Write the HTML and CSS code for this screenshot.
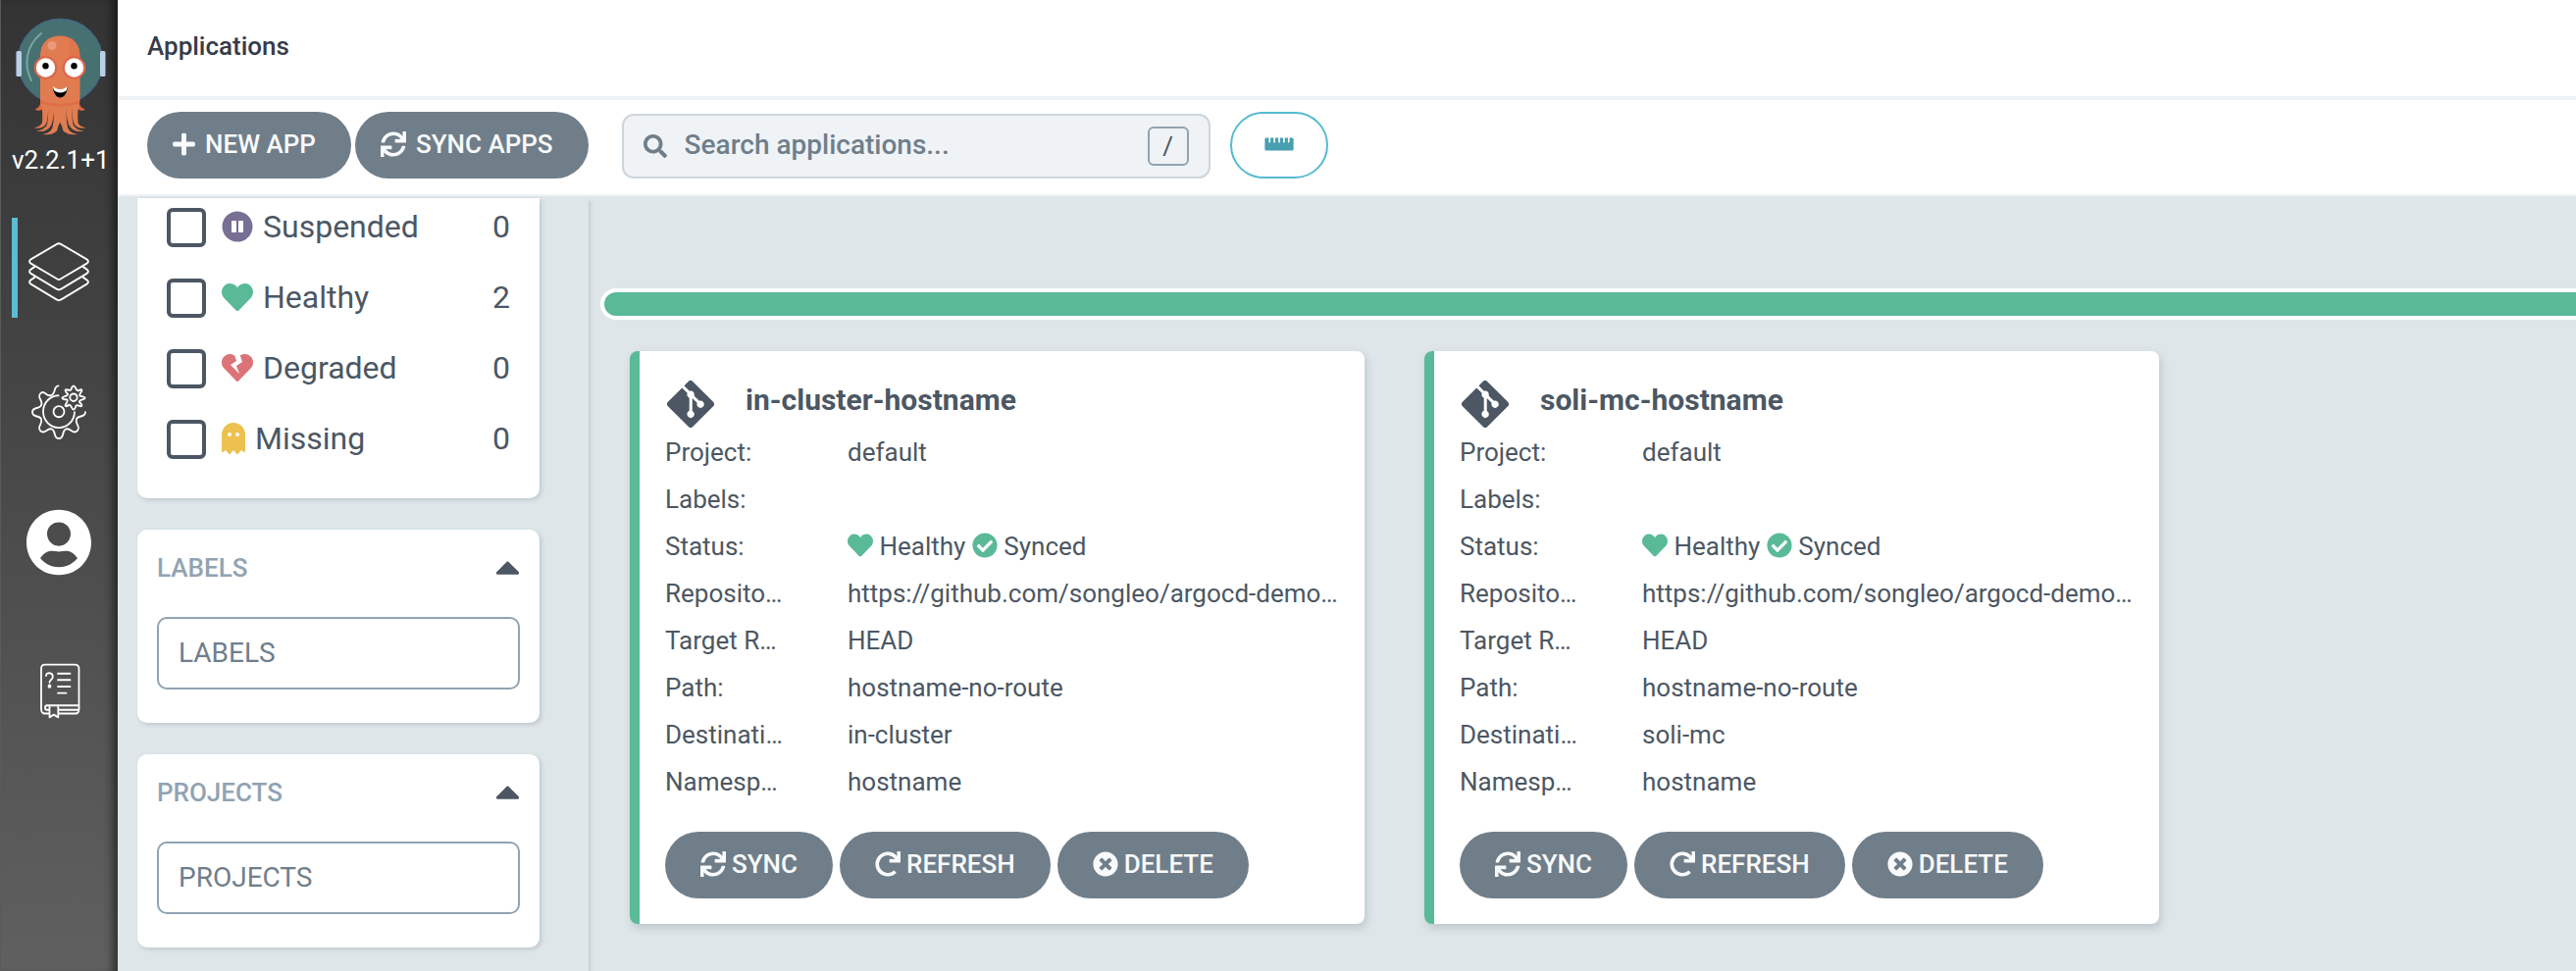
FILE: index.html
```html
<!DOCTYPE html>
<html lang="en">
<head>
<meta charset="utf-8">
<title>Applications - Argo CD</title>
<link rel="stylesheet" href="styles.css">
</head>
<body>
<svg class="sprite" aria-hidden="true">
  <symbol id="i-plus" viewBox="0 0 448 512"><path d="M416 208H272V64c0-17.670-14.330-32-32-32h-32c-17.670 0-32 14.330-32 32v144H32c-17.670 0-32 14.330-32 32v32c0 17.670 14.330 32 32 32h144v144c0 17.670 14.330 32 32 32h32c17.670 0 32-14.330 32-32V304h144c17.670 0 32-14.330 32-32v-32c0-17.670-14.330-32-32-32z"/></symbol>
  <symbol id="i-sync" viewBox="0 0 512 512"><path d="M440.650 12.570l4 82.770A247.160 247.160 0 0 0 255.830 8C134.730 8 33.910 94.920 12.290 209.820A12 12 0 0 0 24.090 224h49.050a12 12 0 0 0 11.670-9.260 175.910 175.910 0 0 1 317-56.940l-101.460-4.860a12 12 0 0 0-12.570 12v47.410a12 12 0 0 0 12 12H500a12 12 0 0 0 12-12V12a12 12 0 0 0-12-12h-47.370a12 12 0 0 0-11.980 12.570zM255.830 432a175.610 175.610 0 0 1-146-77.800l101.800 4.870a12 12 0 0 0 12.570-12v-47.400a12 12 0 0 0-12-12H12a12 12 0 0 0-12 12V500a12 12 0 0 0 12 12h47.350a12 12 0 0 0 12-12.600l-4.150-82.570A247.170 247.170 0 0 0 255.830 504c121.110 0 221.930-86.920 243.550-201.820a12 12 0 0 0-11.800-14.180h-49.050a12 12 0 0 0-11.670 9.260A175.860 175.860 0 0 1 255.830 432z"/></symbol>
  <symbol id="i-redo" viewBox="0 0 512 512"><path d="M500.330 0h-47.410a12 12 0 0 0-12 12.570l4 82.760A247.420 247.420 0 0 0 256 8C119.340 8 7.900 119.530 8 256.190 8.100 393.070 119.100 504 256 504a247.100 247.100 0 0 0 166.180-63.910 12 12 0 0 0 .480-17.430l-34-34a12 12 0 0 0-16.380-.550A176 176 0 1 1 402.100 157.800l-101.530-4.870a12 12 0 0 0-12.570 12v47.410a12 12 0 0 0 12 12h200.330a12 12 0 0 0 12-12V12a12 12 0 0 0-12-12z"/></symbol>
  <symbol id="i-times" viewBox="0 0 512 512"><path d="M256 8C119 8 8 119 8 256s111 248 248 248 248-111 248-248S393 8 256 8zm121.600 313.100c4.700 4.700 4.700 12.300 0 17L338 377.600c-4.700 4.700-12.300 4.700-17 0L256 312l-65.100 65.600c-4.700 4.700-12.300 4.700-17 0L134.400 338c-4.700-4.700-4.700-12.300 0-17l65.600-65-65.600-65.100c-4.700-4.700-4.700-12.300 0-17l39.600-39.600c4.700-4.700 12.300-4.700 17 0l65 65.700 65.100-65.600c4.700-4.700 12.300-4.700 17 0l39.600 39.600c4.700 4.700 4.700 12.300 0 17L312 256l65.600 65.100z"/></symbol>
  <symbol id="i-search" viewBox="0 0 512 512"><path d="M505 442.700L405.300 343c-4.500-4.500-10.600-7-17-7H372c27.600-35.300 44-79.700 44-128C416 93.100 322.900 0 208 0S0 93.100 0 208s93.100 208 208 208c48.300 0 92.700-16.400 128-44v16.300c0 6.400 2.500 12.500 7 17l99.700 99.700c9.400 9.400 24.600 9.400 33.900 0l28.300-28.300c9.400-9.400 9.400-24.600.1-34zM208 336c-70.700 0-128-57.200-128-128 0-70.700 57.200-128 128-128 70.700 0 128 57.200 128 128 0 70.700-57.200 128-128 128z"/></symbol>
  <symbol id="i-ruler" viewBox="0 0 576 512"><path d="M544 128h-48v88c0 4.400-3.600 8-8 8h-16c-4.400 0-8-3.600-8-8v-88h-64v88c0 4.400-3.600 8-8 8h-16c-4.400 0-8-3.600-8-8v-88h-64v88c0 4.400-3.600 8-8 8h-16c-4.400 0-8-3.600-8-8v-88h-64v88c0 4.400-3.600 8-8 8h-16c-4.400 0-8-3.600-8-8v-88h-64v88c0 4.400-3.600 8-8 8H88c-4.400 0-8-3.600-8-8v-88H32c-17.700 0-32 14.300-32 32v192c0 17.700 14.300 32 32 32h512c17.700 0 32-14.300 32-32V160c0-17.700-14.300-32-32-32z"/></symbol>
  <symbol id="i-heart" viewBox="0 0 512 512"><path d="M462.300 62.600C407.500 15.900 326 24.300 275.700 76.200L256 96.500l-19.700-20.300C186.100 24.300 104.500 15.900 49.700 62.600c-62.800 53.600-66.100 149.800-9.900 207.900l193.500 199.800c12.500 12.900 32.800 12.900 45.300 0l193.500-199.800c56.300-58.100 53-154.300-9.800-207.900z"/></symbol>
  <symbol id="i-broken" viewBox="0 0 512 512"><path d="M473.700 73.800l-2.400-2.500c-46-47-118-51.700-169.600-14.800L336 159.900l-96 64 48 128-144-144 96-64-28.600-86.500C159.700 19.600 87 24 40.700 71.400l-2.400 2.400C-10.400 123.600-12.500 202.900 31 256l212.100 218.600c7.100 7.300 18.600 7.300 25.700 0L481 255.900c43.500-53 41.400-132.300-7.300-182.100z"/></symbol>
  <symbol id="i-pause" viewBox="0 0 512 512"><path d="M256 8C119 8 8 119 8 256s111 248 248 248 248-111 248-248S393 8 256 8zm-16 328c0 8.800-7.200 16-16 16h-48c-8.800 0-16-7.200-16-16V176c0-8.800 7.200-16 16-16h48c8.800 0 16 7.200 16 16v160zm112 0c0 8.800-7.200 16-16 16h-48c-8.800 0-16-7.200-16-16V176c0-8.800 7.200-16 16-16h48c8.800 0 16 7.200 16 16v160z"/></symbol>
  <symbol id="i-ghost" viewBox="0 0 384 512"><path d="M186.100.090C81.010 3.240 0 94.920 0 200.050v263.920c0 14.260 17.230 21.390 27.310 11.310l24.920-18.530c6.660-4.950 16-3.990 21.510 2.210l42.950 48.350c6.250 6.250 16.380 6.250 22.630 0l40.720-45.850c6.370-7.170 17.560-7.170 23.920 0l40.720 45.850c6.250 6.250 16.380 6.250 22.630 0l42.950-48.350c5.510-6.200 14.850-7.170 21.510-2.210l24.920 18.530c10.080 10.080 27.310 2.940 27.310-11.310V192C384 84 294.830-3.170 186.100.090zM128 224c-17.670 0-32-14.330-32-32s14.330-32 32-32 32 14.330 32 32-14.330 32-32 32zm128 0c-17.670 0-32-14.330-32-32s14.330-32 32-32 32 14.330 32 32-14.330 32-32 32z"/></symbol>
  <symbol id="i-check" viewBox="0 0 512 512"><path d="M504 256c0 136.967-111.033 248-248 248S8 392.967 8 256 119.033 8 256 8s248 111.033 248 248zM227.314 387.314l184-184c6.248-6.248 6.248-16.379 0-22.627l-22.627-22.627c-6.248-6.249-16.379-6.249-22.628 0L216 308.118l-70.059-70.059c-6.248-6.248-16.379-6.248-22.628 0l-22.627 22.627c-6.248 6.248-6.248 16.379 0 22.627l104 104c6.249 6.249 16.379 6.249 22.628.001z"/></symbol>
  <symbol id="i-git" viewBox="0 32 448 448"><path d="M439.550 236.050L244 40.450a28.870 28.870 0 0 0-40.810 0l-40.660 40.630 51.520 51.520c27.060-9.140 52.680 16.770 43.390 43.680l49.660 49.660c34.230-11.800 61.180 31 35.470 56.690-26.490 26.490-70.210-2.870-56-37.340L240.220 199v121.850c25.300 12.540 22.260 41.850 9.080 55a34.340 34.340 0 0 1-48.550 0c-17.570-17.600-11.070-46.910 11.250-56v-123c-20.800-8.510-24.600-30.740-18.640-45L142.570 101 8.450 235.140a28.860 28.860 0 0 0 0 40.810l195.610 195.600a28.860 28.860 0 0 0 40.800 0l194.690-194.690a28.860 28.860 0 0 0 0-40.810z"/></symbol>
  <symbol id="i-caret" viewBox="0 176 320 192"><path d="M288.662 352H31.338c-17.818 0-26.741-21.543-14.142-34.142l128.662-128.662c7.810-7.810 20.474-7.810 28.284 0l128.662 128.662c12.600 12.599 3.676 34.142-14.142 34.142z"/></symbol>
  <symbol id="argo-arms" viewBox="0 0 120 142">
    <path d="M41.500 100H49.500Q49.500 118 47.500 125Q45 132 34.500 130.300Q42 129 43 125Q44 117 41.500 100Z"/>
    <path d="M48.500 100H55.500Q55.500 119 52.500 127Q48.500 135.500 37 133.800Q46 132 48 127Q50 118 48.500 100Z"/>
    <path d="M54 100H62V123.500Q59 128 58 133.500Q52 138.500 43.500 137Q51.500 135.500 53.500 130Q56 120 54 100Z"/>
  </symbol>
</svg>

<div class="app">
  <aside class="sidebar">
    <svg class="logo" viewBox="0 0 120 142" aria-label="Argo">
      <circle cx="61.500" cy="62.500" r="43" fill="#477070" stroke="#456a88" stroke-width="1.500"/>
      <path d="M42 34C26 47 24 67 32 82" fill="none" stroke="#7aa7a3" stroke-width="2" stroke-linecap="round"/>
      <rect x="16.500" y="52" width="5.500" height="26" rx="1.500" fill="#b9cfe9"/>
      <rect x="102" y="52" width="5.500" height="26" rx="1.500" fill="#b9cfe9"/>
      <path d="M41.500 102C41.500 108 39 110 35.500 111.500C38 113.500 41 113 43 111.500L80 111.500C82 113 84.500 113.500 87 111.500C83 110 80.500 108 80.500 102Z" fill="#dd6848"/>
      <path d="M41 102V57C41 44 49 36.500 61 36.500S81.500 44 81.500 57V102L80 111H42.500Z" fill="#e17c50"/>
      <g fill="#e17c50">
        <use href="#argo-arms" width="120" height="142"/>
        <use href="#argo-arms" width="120" height="142" transform="matrix(-1 0 0 1 122.500 0)"/>
      </g>
      <path d="M64 37C76 45 69 56 69 72H81.500V57C81.500 44 74 37 64 37Z" fill="#df7049" opacity=".55"/>
      <path d="M42 104Q61.500 111 80.500 104" fill="none" stroke="#df6d4a" stroke-width="2.500"/>
      <circle cx="53" cy="46.500" r="4.500" fill="#e99a7c"/>
      <circle cx="46.500" cy="69" r="11.800" fill="#dd6548"/><circle cx="75.500" cy="69" r="11.800" fill="#dd6548"/>
      <circle cx="46.500" cy="69" r="9.700" fill="#fff"/><circle cx="75.500" cy="69" r="9.700" fill="#fff"/>
      <circle cx="46.500" cy="67.300" r="3.200" fill="#000"/><circle cx="75.500" cy="67.300" r="3.200" fill="#000"/>
      <path d="M54 87.500C57 92.500 66 92.500 68.700 87.500C69 95 65 99.500 61.300 99.500S54 95 54 87.500Z" fill="#000"/>
      <path d="M54 87.500C57 92 66 92 68.700 87.500C68.500 90 68 91.500 67.500 92.500C64 95 59 95 55.500 92.500C54.500 91 54 89.500 54 87.500Z" fill="#fff"/>
    </svg>
    <div class="version">v2.2.1+1</div>
    <nav class="nav">
      <a class="nav-link nav-link-active" href="#" aria-label="Applications">
        <svg viewBox="0 221 120 95" preserveAspectRatio="none"><g class="line">
          <path d="M58 246Q60 245 62 246L88.500 260.500Q91.500 262.500 88.500 264.500L62 279Q60 280.500 58 279L31.500 264.500Q28.500 262.500 31.500 260.500Z"/>
          <path d="M35.500 267.500L31.500 270Q28.500 272 31.500 274L58 288.800Q60 290 62 288.800L88.500 274Q91.500 272 88.500 270L84.500 267.500"/>
          <path d="M35.500 277.500L31.500 280Q28.500 282 31.500 284L58 298.800Q60 300 62 298.800L88.500 284Q91.500 282 88.500 280L84.500 277.500"/>
        </g></svg>
      </a>
      <a class="nav-link" href="#" aria-label="Settings">
        <svg viewBox="0 355 120 95" preserveAspectRatio="none"><g class="line">
          <path d="M59.500 380.500C54 381 57.500 388 52 389.500C47 391.500 46 384 41.500 387.500C37 392 44.500 394 42 399C40.500 403 33 400 33 405.500S40.500 408 42 412C44 417 37 419 41.500 423.500C46 427 48 420 52.500 421.500C57.500 423 54 430.500 60 430.500S62.500 423 67.500 421.500C72 420 74 427 78.500 423.500C83 419 76 417 78 412C79.500 408 87 411 87 405.500"/>
          <path d="M59.500 389.700A16 15.300 0 1 0 76 405.500"/>
          <ellipse cx="60" cy="405" rx="5.500" ry="5.200"/><ellipse cx="75" cy="391.500" rx="3.700" ry="3.500"/>
          <path d="M73 382.500Q75 378.500 77 382.500T81.300 384.300Q85.200 383.300 82.300 387T84 390.500Q89.500 392 84 393.500T82.300 397Q85.200 401 81 399.500T77 401Q75 405 73 401T69 399.500Q64.800 401 67.700 397T66 393.500Q60.500 392 66 390.500T67.700 387Q64.800 383.300 69 384.300T73 382.500Z"/>
        </g></svg>
      </a>
      <a class="nav-link" href="#" aria-label="User Info">
        <svg viewBox="0 489 120 95" preserveAspectRatio="none"><path fill="#fff" fill-rule="evenodd" d="M27 529C27 512 41 498 60 498S93 512 93 529S79 560 60 560S27 546 27 529ZM48 521C48 527.500 53.500 532.500 60 532.500S72 527.500 72 521S66.500 510 60 510S48 514.500 48 521ZM41 544C51 555.500 69 555.500 79 544C73 536 67 536.500 60 538C53 536.500 47 536 41 544Z"/></svg>
      </a>
      <a class="nav-link" href="#" aria-label="Documentation">
        <svg viewBox="0 623 120 95" preserveAspectRatio="none"><g class="line">
          <path d="M49.500 691.500H46Q42 691.500 42 687V649Q42 645 46 645H76Q80.500 645 80.500 649V687Q80.500 691.500 77 691.500H60"/>
          <path d="M80 683.800H48Q46 683.800 46 686T48 688H50M80 688H60"/>
          <path d="M50.500 684V695L54.800 692.500L59.300 695V684"/>
          <path d="M59 653.500H71.500M59 659.500H71.500M59 665.800H71.500M59 672H67.500"/>
          <path d="M47 655.500C47 652 53.800 652 53.800 656.500C53.800 659.500 50.500 659 50.500 662"/>
          <circle cx="50.500" cy="665.500" r="1"/>
        </g></svg>
      </a>
    </nav>
  </aside>

  <div class="main">
    <header class="header"><h1 class="header-title">Applications</h1></header>
    <div class="toolbar">
      <div class="toolbar-actions">
        <button class="btn btn-wide" type="button"><svg class="icon icon-narrow"><use href="#i-plus"/></svg>NEW APP</button>
        <button class="btn btn-wide" type="button"><svg class="icon"><use href="#i-sync"/></svg>SYNC APPS</button>
      </div>
      <div class="search">
        <svg class="icon search-icon"><use href="#i-search"/></svg>
        <input class="search-input" type="text" placeholder="Search applications..." aria-label="Search applications">
        <kbd class="search-key">/</kbd>
      </div>
      <button class="btn-outline" type="button" aria-label="Toggle compact view"><svg class="icon-ruler"><use href="#i-ruler"/></svg></button>
    </div>

    <div class="content">
      <section class="filters">
        <div class="panel panel-health">
          <label class="check-row"><input class="check" type="checkbox"><span class="check-label"><svg class="icon-lg purple"><use href="#i-pause"/></svg>Suspended</span><span class="count">0</span></label>
          <label class="check-row"><input class="check" type="checkbox"><span class="check-label"><svg class="icon-lg green"><use href="#i-heart"/></svg>Healthy</span><span class="count">2</span></label>
          <label class="check-row"><input class="check" type="checkbox"><span class="check-label"><svg class="icon-lg red"><use href="#i-broken"/></svg>Degraded</span><span class="count">0</span></label>
          <label class="check-row"><input class="check" type="checkbox"><span class="check-label"><svg class="icon-lg icon-ghost yellow"><use href="#i-ghost"/></svg>Missing</span><span class="count">0</span></label>
        </div>
        <div class="panel">
          <div class="panel-head"><label for="f-labels">LABELS</label><svg class="caret"><use href="#i-caret"/></svg></div>
          <input class="panel-input" id="f-labels" type="text" placeholder="LABELS">
        </div>
        <div class="panel">
          <div class="panel-head"><label for="f-projects">PROJECTS</label><svg class="caret"><use href="#i-caret"/></svg></div>
          <input class="panel-input" id="f-projects" type="text" placeholder="PROJECTS">
        </div>
      </section>

      <section class="apps">
        <div class="status-bar"><div class="status-fill"></div></div>
        <div class="tiles">
          <article class="tile">
            <div class="tile-head"><svg class="git"><use href="#i-git"/></svg><h2 class="tile-title">in-cluster-hostname</h2></div>
            <dl class="facts">
              <dt>Project:</dt><dd>default</dd>
              <dt>Labels:</dt><dd></dd>
              <dt>Status:</dt><dd><svg class="icon green"><use href="#i-heart"/></svg> Healthy <svg class="icon green"><use href="#i-check"/></svg> Synced</dd>
              <dt>Repository:</dt><dd>https://github.com/songleo/argocd-demo.git</dd>
              <dt>Target Revision:</dt><dd>HEAD</dd>
              <dt>Path:</dt><dd>hostname-no-route</dd>
              <dt>Destination:</dt><dd>in-cluster</dd>
              <dt>Namespace:</dt><dd>hostname</dd>
            </dl>
            <div class="tile-actions">
              <button class="btn" type="button"><svg class="icon"><use href="#i-sync"/></svg>SYNC</button>
              <button class="btn" type="button"><svg class="icon"><use href="#i-redo"/></svg>REFRESH</button>
              <button class="btn" type="button"><svg class="icon"><use href="#i-times"/></svg>DELETE</button>
            </div>
          </article>
          <article class="tile">
            <div class="tile-head"><svg class="git"><use href="#i-git"/></svg><h2 class="tile-title">soli-mc-hostname</h2></div>
            <dl class="facts">
              <dt>Project:</dt><dd>default</dd>
              <dt>Labels:</dt><dd></dd>
              <dt>Status:</dt><dd><svg class="icon green"><use href="#i-heart"/></svg> Healthy <svg class="icon green"><use href="#i-check"/></svg> Synced</dd>
              <dt>Repository:</dt><dd>https://github.com/songleo/argocd-demo.git</dd>
              <dt>Target Revision:</dt><dd>HEAD</dd>
              <dt>Path:</dt><dd>hostname-no-route</dd>
              <dt>Destination:</dt><dd>soli-mc</dd>
              <dt>Namespace:</dt><dd>hostname</dd>
            </dl>
            <div class="tile-actions">
              <button class="btn" type="button"><svg class="icon"><use href="#i-sync"/></svg>SYNC</button>
              <button class="btn" type="button"><svg class="icon"><use href="#i-redo"/></svg>REFRESH</button>
              <button class="btn" type="button"><svg class="icon"><use href="#i-times"/></svg>DELETE</button>
            </div>
          </article>
        </div>
      </section>
    </div>
  </div>
</div>
</body>
</html>
```
FILE: styles.css
```css
* { box-sizing: border-box; }

body {
  margin: 0;
  font-family: Roboto, "Liberation Sans", sans-serif;
  font-size: 26px;
  color: #4c5763;
  background: #dee6e9;
}

button, input { font-family: inherit; }

.sprite { position: absolute; width: 0; height: 0; }

.app { display: flex; min-height: 100vh; }

/* Sidebar */
.sidebar {
  flex: none;
  width: 120px;
  background: linear-gradient(to bottom, #333333, #606060);
  border-left: 1px solid #5a5a5a;
  box-shadow: inset -10px 0 10px -5px rgba(0, 0, 0, .5);
}
.logo { display: block; width: 120px; height: 142px; margin-left: -1px; }
.version {
  margin: 4px 0 0 11px;
  line-height: 34px;
  color: #fff;
  white-space: nowrap;
}
.nav { display: flex; flex-direction: column; gap: 42px; margin: 42px 0 0 -1px; }
.nav-link { display: block; height: 102px; }
.nav-link svg { display: block; width: 120px; height: 102px; }
.nav-link-active {
  background: linear-gradient(#5bbcd4, #5bbcd4) 12px 0 / 6px 100% no-repeat;
}
.line {
  fill: none;
  stroke: #fff;
  stroke-width: 1.8px;
  stroke-linecap: round;
  stroke-linejoin: round;
}

/* Header and toolbar */
.main { flex: 1; min-width: 0; display: flex; flex-direction: column; }
.header {
  height: 102px;
  padding: 0 30px 4px;
  display: flex;
  align-items: center;
  background: #fff;
  border-bottom: 4px solid #eff3f6;
}
.header-title { margin: 0; font-size: 26px; line-height: 32px; font-weight: 500; color: #363c4a; }
.toolbar {
  height: 98px;
  padding: 12px 30px;
  display: flex;
  background: #fff;
  border-bottom: 2px solid #eff3f6;
}
.toolbar-actions { display: flex; gap: 4px; margin-right: 34px; }
.btn {
  display: flex;
  align-items: center;
  gap: 6px;
  height: 68px;
  padding: 0 36px 2px;
  border: 0;
  border-radius: 34px;
  background: #707e8a;
  color: #f8fafb;
  font-size: 26px;
  font-weight: 500;
}
.btn-wide { gap: 10px; padding: 0 36px 2px 26px; }
.icon { width: 26px; height: 26px; fill: currentColor; vertical-align: -3px; }
.icon-narrow { width: 23px; }
.search {
  display: flex;
  align-items: center;
  width: 600px;
  height: 66px;
  margin: 2px 20px 0 0;
  padding: 0 20px;
  border: 2px solid #cdd5db;
  border-radius: 12px;
  background: #eff3f6;
}
.search-icon { width: 24px; height: 24px; fill: #707e8a; }
.search-input {
  flex: 1;
  min-width: 0;
  height: 60px;
  padding: 0 0 4px 18px;
  border: 0;
  outline: 0;
  background: transparent;
  font-size: 28px;
  font-weight: 500;
  color: #4c5763;
}
.search-input::placeholder { color: #707e8a; opacity: 1; }
.search-key {
  width: 42px;
  height: 40px;
  border: 2px solid #91a3b2;
  border-radius: 6px;
  font-family: inherit;
  font-size: 26px;
  line-height: 36px;
  text-align: center;
}
.btn-outline {
  display: flex;
  align-items: center;
  justify-content: center;
  width: 100px;
  height: 68px;
  padding: 0 0 2px;
  border: 2px solid #56bad1;
  border-radius: 34px;
  background: #fff;
}
.icon-ruler { width: 30px; height: 26px; fill: #479fb0; }

/* Filters */
.content { flex: 1; display: flex; padding-top: 2px; }
.filters {
  flex: none;
  width: 480px;
  padding: 0 50px 24px 20px;
  display: flex;
  flex-direction: column;
  gap: 32px;
  box-shadow: 2px 3px 3px rgba(73, 87, 99, .18);
}
.panel {
  padding: 22px 20px 34px;
  background: #fff;
  border-radius: 10px;
  box-shadow: 2px 2px 4px rgba(73, 87, 99, .2);
}
.panel-health {
  display: flex;
  flex-direction: column;
  gap: 32px;
  padding: 10px 30px 40px;
  border-radius: 0 0 10px 10px;
}
.check-row { display: flex; align-items: center; height: 40px; font-size: 32px; line-height: 36px; }
.check {
  appearance: none;
  width: 40px;
  height: 40px;
  margin: 0 16px 0 0;
  border: 4px solid #4c5763;
  border-radius: 6px;
}
.check-label { flex: 1; display: flex; align-items: center; gap: 10px; padding-bottom: 3px; }
.count { padding-bottom: 3px; }
.icon-lg { width: 32px; height: 32px; fill: currentColor; }
.icon-ghost { width: 24px; }
.green { fill: #5aba98; }
.purple { fill: #776f94; }
.red { fill: #db7378; }
.yellow { fill: #edc150; }
.panel-head {
  display: flex;
  align-items: center;
  justify-content: space-between;
  height: 34px;
  margin-bottom: 33px;
  font-weight: 500;
  color: #91a3b2;
}
.caret { width: 25px; height: 15px; fill: #4c5763; }
.panel-input {
  display: block;
  width: 100%;
  height: 74px;
  padding: 0 20px 2px;
  border: 2px solid #91a3b2;
  border-radius: 10px;
  background: #fff;
  font-size: 28px;
  color: #4c5763;
}
.panel-input::placeholder { color: #707e8a; opacity: 1; }

/* Applications */
.apps { flex: 1; min-width: 0; padding: 92px 0 48px 12px; }
.status-bar {
  height: 32px;
  padding: 4px 0 4px 4px;
  border-radius: 16px 0 0 16px;
  background: #fff;
}
.status-fill { height: 24px; border-radius: 12px 0 0 12px; background: #5aba98; }
.tiles {
  display: grid;
  grid-template-columns: repeat(auto-fill, minmax(0, 749px));
  gap: 61px;
  padding: 32px 0 0 30px;
}
.tile {
  padding: 30px 26px 26px;
  border-left: 10px solid #5aba98;
  border-radius: 8px;
  background: #fff;
  box-shadow: 2px 4px 8px rgba(73, 87, 99, .22);
}
.tile-head { display: flex; align-items: flex-start; gap: 32px; }
.git { width: 48px; height: 48px; margin-left: 2px; fill: #4c5763; }
.tile-title { margin: 0; font-size: 30px; line-height: 40px; font-weight: 700; }
.facts {
  display: grid;
  grid-template-columns: 120px minmax(0, 1fr);
  column-gap: 66px;
  grid-auto-rows: 48px;
  margin: 1px 0 27px;
  line-height: 48px;
}
.facts dt, .facts dd {
  margin: 0;
  overflow: hidden;
  white-space: nowrap;
  text-overflow: ellipsis;
}
.tile-actions { display: flex; gap: 7px; }
```
